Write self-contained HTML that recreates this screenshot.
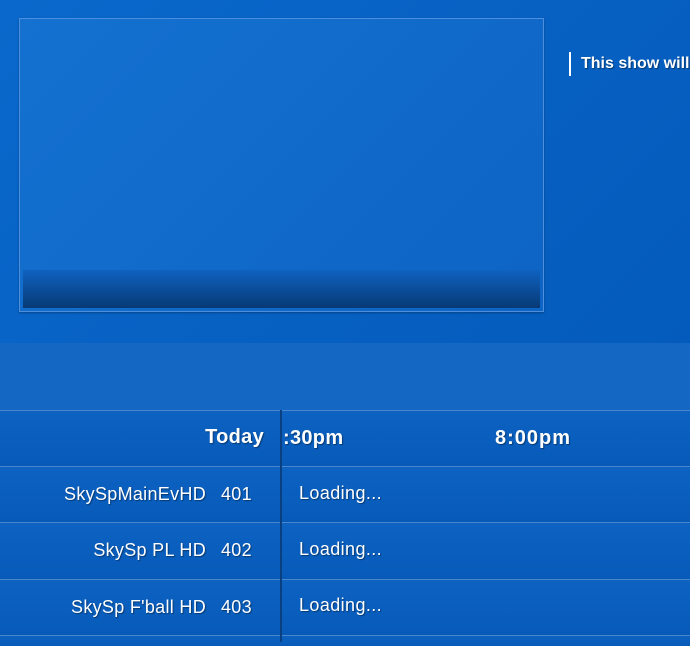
<!DOCTYPE html>
<html><head><style>
body{margin:0;width:690px;height:642px;overflow:hidden;background:#075fc0;font-family:"Liberation Sans",sans-serif;color:#fff;position:relative}
.top{position:absolute;left:0;top:0;width:690px;height:343px;background:linear-gradient(135deg,#0a68cc,#045bbb)}
.vid{position:absolute;left:19px;top:18px;width:523px;height:292px;border:1px solid #4d8fdc;background:linear-gradient(135deg,#1471d0,#0d64c4);box-shadow:0 1px 2px rgba(0,0,0,.3)}
.vid .in{position:absolute;left:3px;right:3px;bottom:3px;height:38px;background:linear-gradient(#0f62c0,#073a75)}
.msg{position:absolute;left:569px;top:52px;border-left:2px solid #fff;padding-left:10px;height:24px;line-height:24px;font-size:16px;font-weight:bold;white-space:nowrap;text-shadow:1px 1px 1px rgba(0,0,0,.4)}
.band{position:absolute;left:0;top:343px;width:690px;height:67px;background:#1468c4}
.row{position:absolute;left:0;width:690px;border-top:1px solid #4a86cc;background:linear-gradient(#0d62c2,#075ab8)}
.div{position:absolute;left:280px;top:410px;width:2px;height:232px;background:#0a3f80}
.t{position:absolute;font-size:18px;white-space:nowrap;text-shadow:1px 1px 1px rgba(0,0,0,.4)}
.h{font-weight:bold;font-size:20px;letter-spacing:0.3px}
.c{font-size:18px;letter-spacing:0.3px}
</style></head><body>
<div class="top"><div class="vid"><div class="in"></div></div><div class="msg">This show will</div></div>
<div class="band"></div>
<div class="row" style="top:410px;height:56px"></div>
<div class="row" style="top:466px;height:56px"></div>
<div class="row" style="top:522px;height:57px"></div>
<div class="row" style="top:579px;height:56px"></div>
<div class="row" style="top:635px;height:10px"></div>
<div class="div"></div>
<div class="t h" style="right:426px;top:426px">Today</div>
<div class="t h" style="left:283px;top:427px">:30pm</div>
<div class="t h" style="left:495px;top:427px;letter-spacing:1px">8:00pm</div>
<div class="t c" style="right:484px;top:484px">SkySpMainEvHD</div>
<div class="t c" style="left:221px;top:484px">401</div>
<div class="t c" style="right:484px;top:540px">SkySp PL HD</div>
<div class="t c" style="left:221px;top:540px">402</div>
<div class="t c" style="right:484px;top:597px">SkySp F'ball HD</div>
<div class="t c" style="left:221px;top:597px">403</div>
<div class="t c" style="left:299px;top:483px;letter-spacing:0.4px">Loading...</div>
<div class="t c" style="left:299px;top:539px;letter-spacing:0.4px">Loading...</div>
<div class="t c" style="left:299px;top:595px;letter-spacing:0.4px">Loading...</div>
</body></html>
